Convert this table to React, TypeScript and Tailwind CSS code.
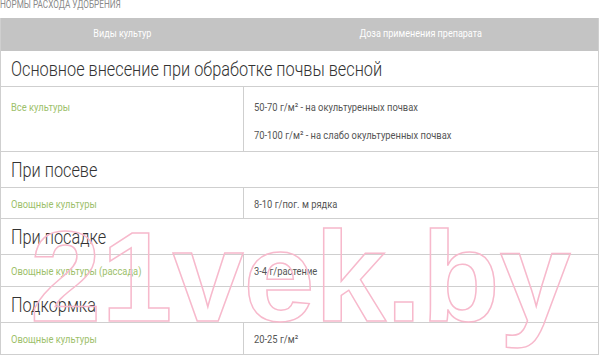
import React from "react";

const green = "text-[#9dbf6b]";

// the source page uses a condensed face; squeeze Roboto to match
function N({ children, c = "origin-left", s = "scale-x-[0.85]" }: { children: React.ReactNode; c?: string; s?: string }) {
  return <span className={`inline-block whitespace-nowrap ${s} ${c}`}>{children}</span>;
}

function Section({ title }: { title: string }) {
  return (
    <div className="flex h-[36px] items-center border-b border-[#cfcfcf] px-[10px] text-[20px] font-light text-[#333]">
      <N s="scale-x-[0.815]">{title}</N>
    </div>
  );
}

function Row({ crop, doses, h, pt = "pt-[9px]" }: { crop: string; doses: string[]; h: string; pt?: string }) {
  return (
    <div className={`grid grid-cols-[243px_1fr] border-b border-[#cfcfcf] text-[11px] ${h}`}>
      <div className={`border-r border-[#cfcfcf] pl-[10px] ${pt} ${green}`}>
        <N>{crop}</N>
      </div>
      <div className={`flex flex-col gap-[11px] pl-[10px] ${pt} text-[#555]`}>
        {doses.map((d) => (
          <div key={d}>
            <N>{d}</N>
          </div>
        ))}
      </div>
    </div>
  );
}

export default function App() {
  return (
    <div className="relative h-[361px] w-[600px] overflow-hidden bg-white" style={{ fontFamily: "Roboto, 'Liberation Sans', sans-serif" }}>
      <div className="h-[19px] text-[10px] uppercase leading-[12px] text-[#8a8a8a] -mt-[1px]">
        <N s="scale-x-[0.82]">Нормы расхода удобрения</N>
      </div>
      <div className="w-[599px] border-x border-[#cfcfcf]">
        <div className="grid h-[33px] grid-cols-[243px_1fr] items-center bg-[#c4c4c4] text-[11px] text-white">
          <div className="text-center">
            <N c="origin-center" s="scale-x-[0.82]">Виды культур</N>
          </div>
          <div className="text-center">
            <N c="origin-center" s="scale-x-[0.82]">Доза применения препарата</N>
          </div>
        </div>
        <Section title="Основное внесение при обработке почвы весной" />
        <Row
          crop="Все культуры"
          doses={["50-70 г/м² - на окультуренных почвах", "70-100 г/м² - на слабо окультуренных почвах"]}
          h="h-[65px]"
          pt="pt-[13px]"
        />
        <Section title="При посеве" />
        <Row crop="Овощные культуры" doses={["8-10 г/пог. м рядка"]} h="h-[31px]" />
        <Section title="При посадке" />
        <Row crop="Овощные культуры (рассада)" doses={["3-4 г/растение"]} h="h-[32px]" />
        <Section title="Подкормка" />
        <Row crop="Овощные культуры" doses={["20-25 г/м²"]} h="h-[32px]" />
      </div>
      <div
        className="pointer-events-none absolute left-[30px] top-[213px] text-[128px] font-black leading-none text-transparent"
        style={{ fontFamily: "'Liberation Sans', Arial, sans-serif", WebkitTextStroke: "1.5px #f7b9cc" }}
      >
        21vek.by
      </div>
    </div>
  );
}
